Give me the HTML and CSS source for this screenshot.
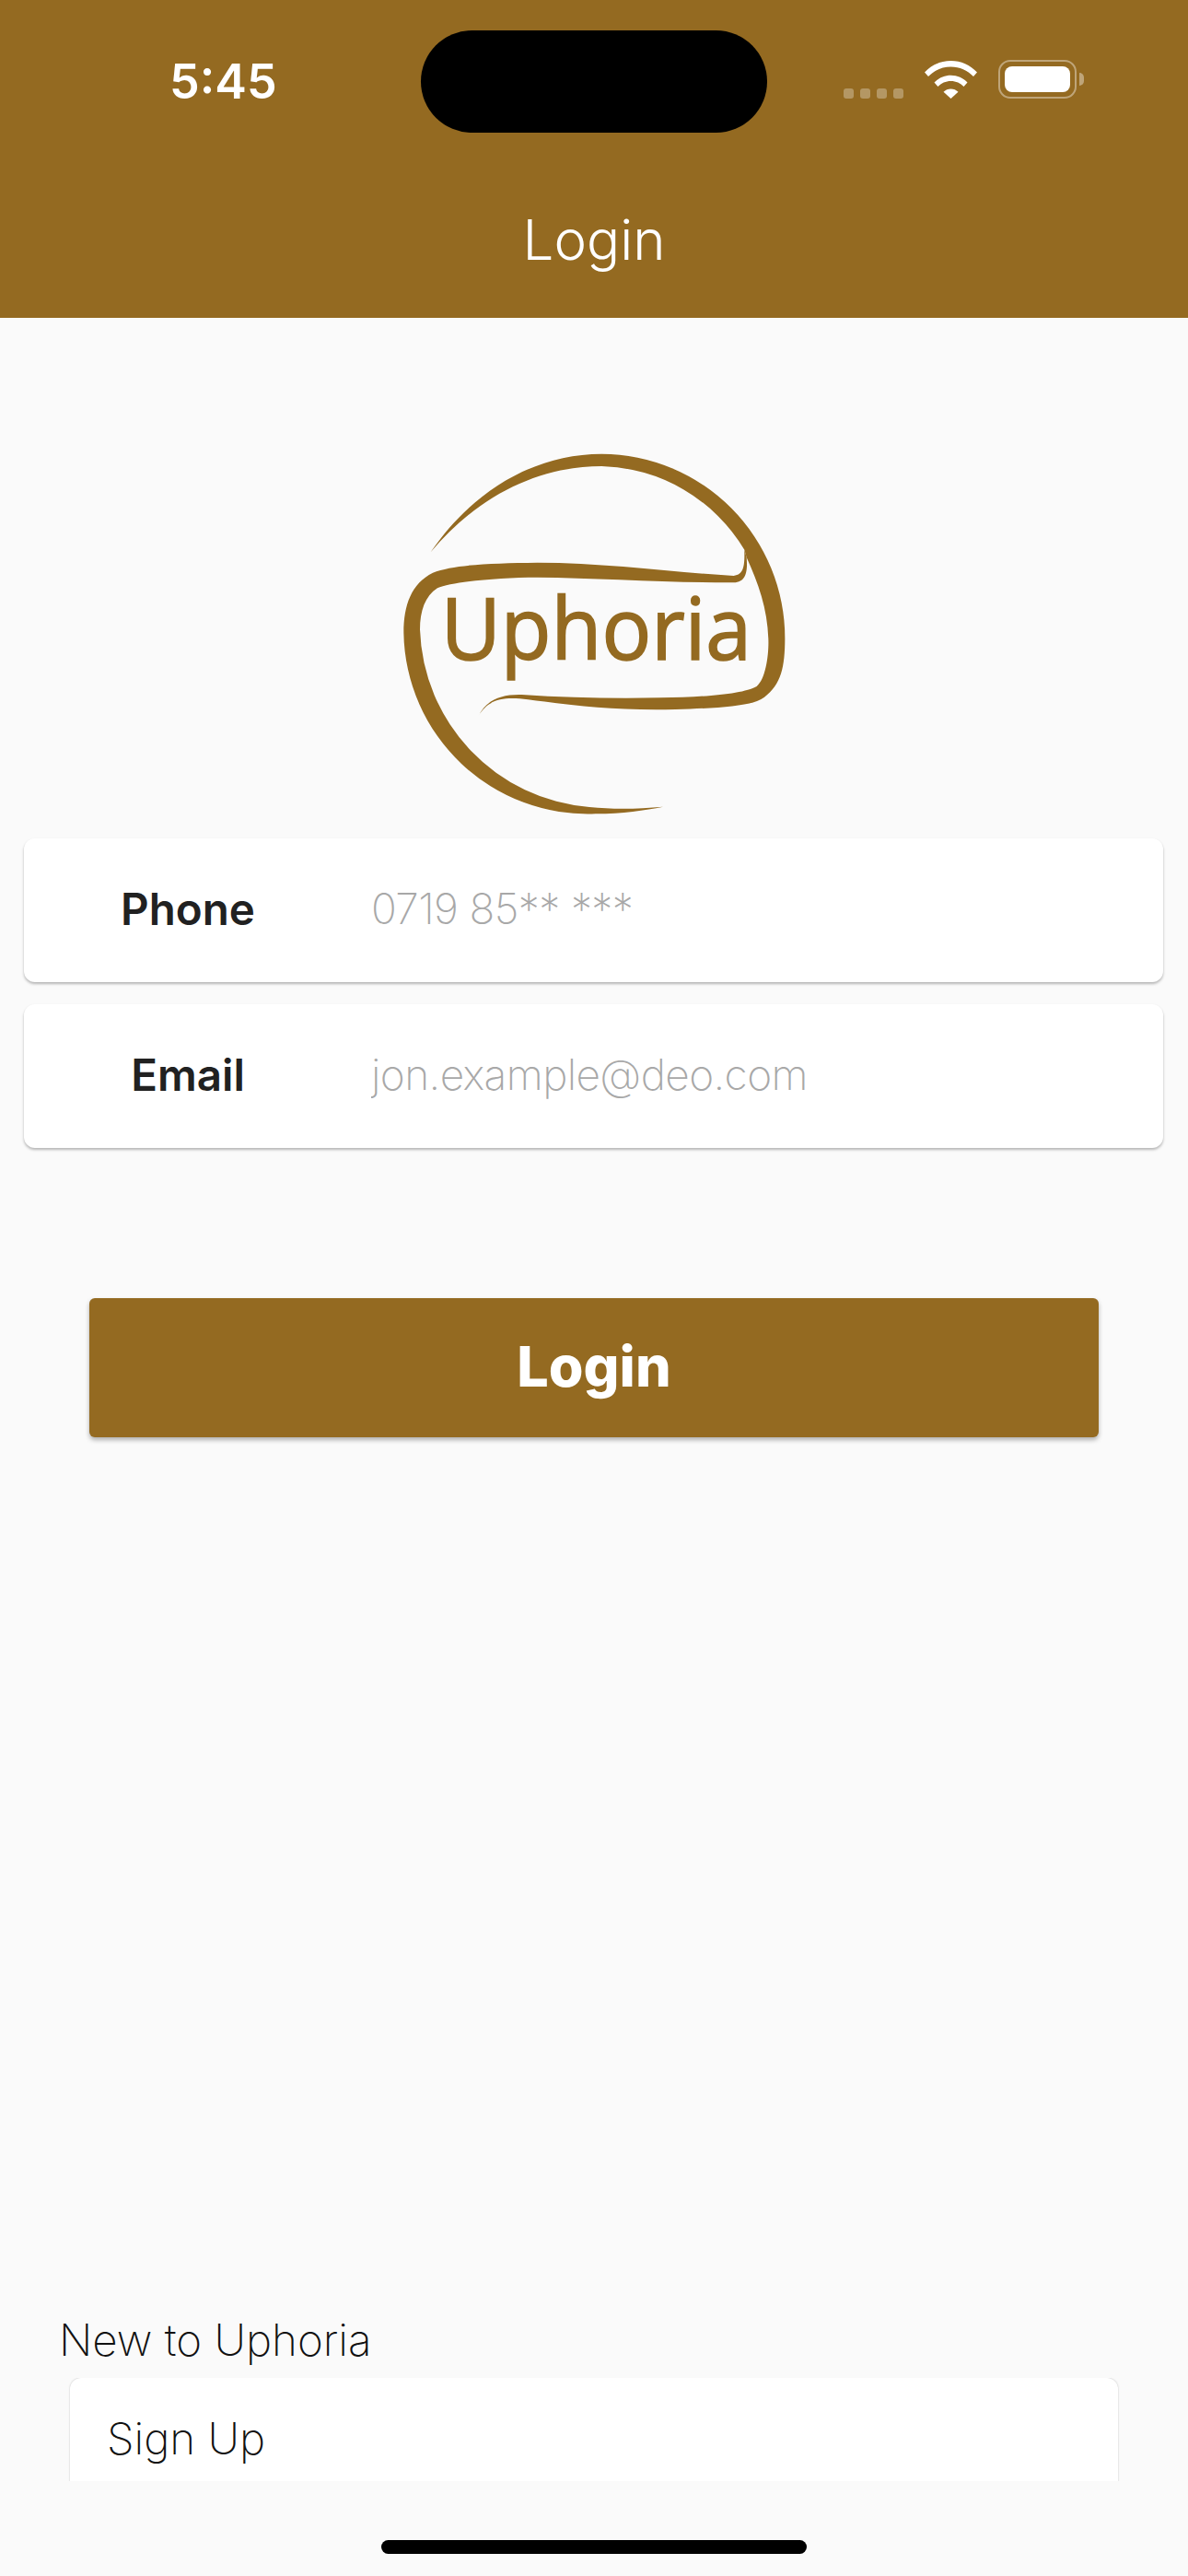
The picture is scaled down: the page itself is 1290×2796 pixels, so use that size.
FILE: index.html
```html
<!DOCTYPE html>
<html>
<head>
    <link rel="stylesheet" href="styles.css">
</head>
<body>
<div class="screen">
    <div class="header">
        <div class="status-bar">
            <span class="time">5:45</span>
            <div class="island"></div>
            <div class="status-icons">
                <div class="signal"><i></i><i></i><i></i><i></i></div>
                <svg class="wifi" width="57" height="41" viewBox="0 0 57 41">
                    <path fill="#fff" d="M0 12.500C7.500 4.500 17.500 0 28.500 0S49.500 4.500 57 12.500L53 17C46.500 10.200 38 6.400 28.500 6.400S10.500 10.200 4 17Z"/>
                    <path fill="#fff" d="M10.500 23.500C15 18.700 21.500 15.700 28.500 15.700S42 18.700 46.500 23.500L42.500 28C39 24.300 34 22 28.500 22S18 24.300 14.500 28Z"/>
                    <path fill="#fff" d="M20.500 33.800C22.600 31.700 25.400 30.500 28.500 30.500S34.400 31.700 36.500 33.800L28.500 41Z"/>
                </svg>
                <div class="battery"><div class="battery-fill"></div></div>
                <div class="battery-cap"></div>
            </div>
        </div>
        <div class="title">Login</div>
    </div>
    <div class="main-content">
        <svg class="logo" width="490" height="430" viewBox="0 0 1470 1290">
            <path fill="#946A21" d="M203 388C330 200 530 68 760 68A600 600 0 0 1 1357 670C1357 760 1345 820 1290 860C1250 890 1150 895 1000 900C800 905 650 885 520 868C450 860 395 860 358 922C385 870 430 850 500 852C650 862 800 865 950 862C1100 860 1220 850 1265 825C1295 800 1305 720 1303 670C1300 570 1270 490 1232 405L1225 380A560 560 0 0 0 760 108C560 108 360 200 203 388Z"/>
            <path fill="#946A21" d="M1225 380C1225 420 1228 462 1190 465C1000 455 780 422 550 422C400 424 280 428 210 455C140 490 115 560 115 650A600 600 0 0 0 740 1240C830 1240 900 1228 960 1217C880 1224 800 1226 720 1218A600 600 0 0 1 168 640C168 580 185 530 225 505C270 485 420 470 550 470C750 472 1000 488 1190 487C1235 487 1235 440 1232 405Z"/>
            <text class="logo-text" x="236" y="737" textLength="1012" lengthAdjust="spacingAndGlyphs">Uphoria</text>
        </svg>
        <div class="field">
            <label class="field-label">Phone</label>
            <input class="field-input" type="text" placeholder="0719 85** ***">
        </div>
        <div class="field">
            <label class="field-label">Email</label>
            <input class="field-input" type="text" placeholder="jon.example@deo.com">
        </div>
        <button class="button">Login</button>
        <div class="footer">
            <p class="new-text">New to Uphoria</p>
            <div class="signup-clip">
                <div class="signup-card">Sign Up</div>
            </div>
            <div class="home-indicator"></div>
        </div>
    </div>
</div>
</body>
</html>
```

FILE: styles.css
```css
* {
    box-sizing: border-box;
}
body {
    margin: 0;
    background-color: #fafafa;
    font-family: Inter, "Liberation Sans", sans-serif;
}
.screen {
    width: 1290px;
    height: 2796px;
    display: flex;
    flex-direction: column;
    overflow: hidden;
}
.header {
    height: 345px;
    background-color: #946A21;
    color: white;
    position: relative;
}
.status-bar {
    display: flex;
    justify-content: space-between;
    align-items: flex-end;
    padding: 65px 113px 0 184px;
}
.time {
    font-size: 52px;
    font-weight: 600;
    line-height: 48px;
}
.island {
    position: absolute;
    left: 457px;
    top: 33px;
    width: 376px;
    height: 111px;
    border-radius: 56px;
    background-color: #000;
}
.status-icons {
    display: flex;
    align-items: flex-end;
    margin-bottom: 6px;
}
.signal {
    display: flex;
    gap: 7px;
    margin-right: 23px;
}
.signal i {
    width: 11px;
    height: 11px;
    border-radius: 3px;
    background-color: rgba(255, 255, 255, 0.3);
}
.wifi {
    display: block;
    margin-right: 23px;
}
.battery {
    width: 85px;
    height: 42px;
    padding: 5px;
    border: 2px solid rgba(255, 255, 255, 0.4);
    border-radius: 13px;
}
.battery-fill {
    height: 100%;
    border-radius: 8px;
    background-color: #fff;
}
.battery-cap {
    width: 5px;
    height: 14px;
    margin: 0 0 14px 3px;
    border-radius: 0 7px 7px 0;
    background-color: rgba(255, 255, 255, 0.4);
}
.title {
    margin-top: 112px;
    text-align: center;
    font-size: 60px;
    font-weight: 300;
    line-height: 70px;
}
.main-content {
    flex: 1;
    display: flex;
    flex-direction: column;
    padding: 125px 0 0;
}
.logo {
    display: block;
    align-self: flex-start;
    margin: 0 0 10px 400px;
}
.logo-text {
    font-family: "Open Sans", sans-serif;
    font-size: 280px;
    font-weight: 500;
    fill: #946A21;
    stroke: #946A21;
    stroke-width: 5px;
}
.field {
    display: flex;
    align-items: center;
    height: 156px;
    margin: 0 27px 24px 26px;
    padding-bottom: 4px;
    background-color: #fff;
    border-radius: 12px;
    box-shadow: 0 2px 3px rgba(0, 0, 0, 0.28);
}
.field-label {
    width: 377px;
    padding-right: 21px;
    text-align: center;
    font-size: 47.500px;
    font-weight: 600;
    color: #212121;
}
.field-input {
    flex: 1;
    min-width: 0;
    border: none;
    outline: none;
    padding: 0;
    background: none;
    font-family: Inter, "Liberation Sans", sans-serif;
    font-size: 46px;
    font-weight: 250;
    letter-spacing: -0.600px;
}
.field-input::placeholder {
    color: #a8a8a8;
    opacity: 1;
}
.button {
    display: block;
    height: 151px;
    margin: 139px 97px 0;
    padding-bottom: 4px;
    border: none;
    border-radius: 6px;
    background-color: #946A21;
    color: white;
    font-family: Inter, "Liberation Sans", sans-serif;
    font-size: 61px;
    font-weight: 800;
    box-shadow: 0 3px 5px rgba(0, 0, 0, 0.3);
}
.footer {
    margin-top: auto;
}
.new-text {
    margin: 0 0 13px 64px;
    font-size: 47.500px;
    font-weight: 150;
    line-height: 56px;
    color: #111;
}
.signup-clip {
    height: 112px;
    padding: 0 76px;
    overflow: hidden;
}
.signup-card {
    height: 156px;
    padding: 38px 40px;
    background-color: #fff;
    border-radius: 12px;
    box-shadow: 0 0 2px rgba(0, 0, 0, 0.25);
    font-size: 47.500px;
    font-weight: 150;
    line-height: 56px;
    color: #111;
}
.home-indicator {
    width: 462px;
    height: 15px;
    margin: 64px auto 24px;
    border-radius: 8px;
    background-color: #000;
}
```
